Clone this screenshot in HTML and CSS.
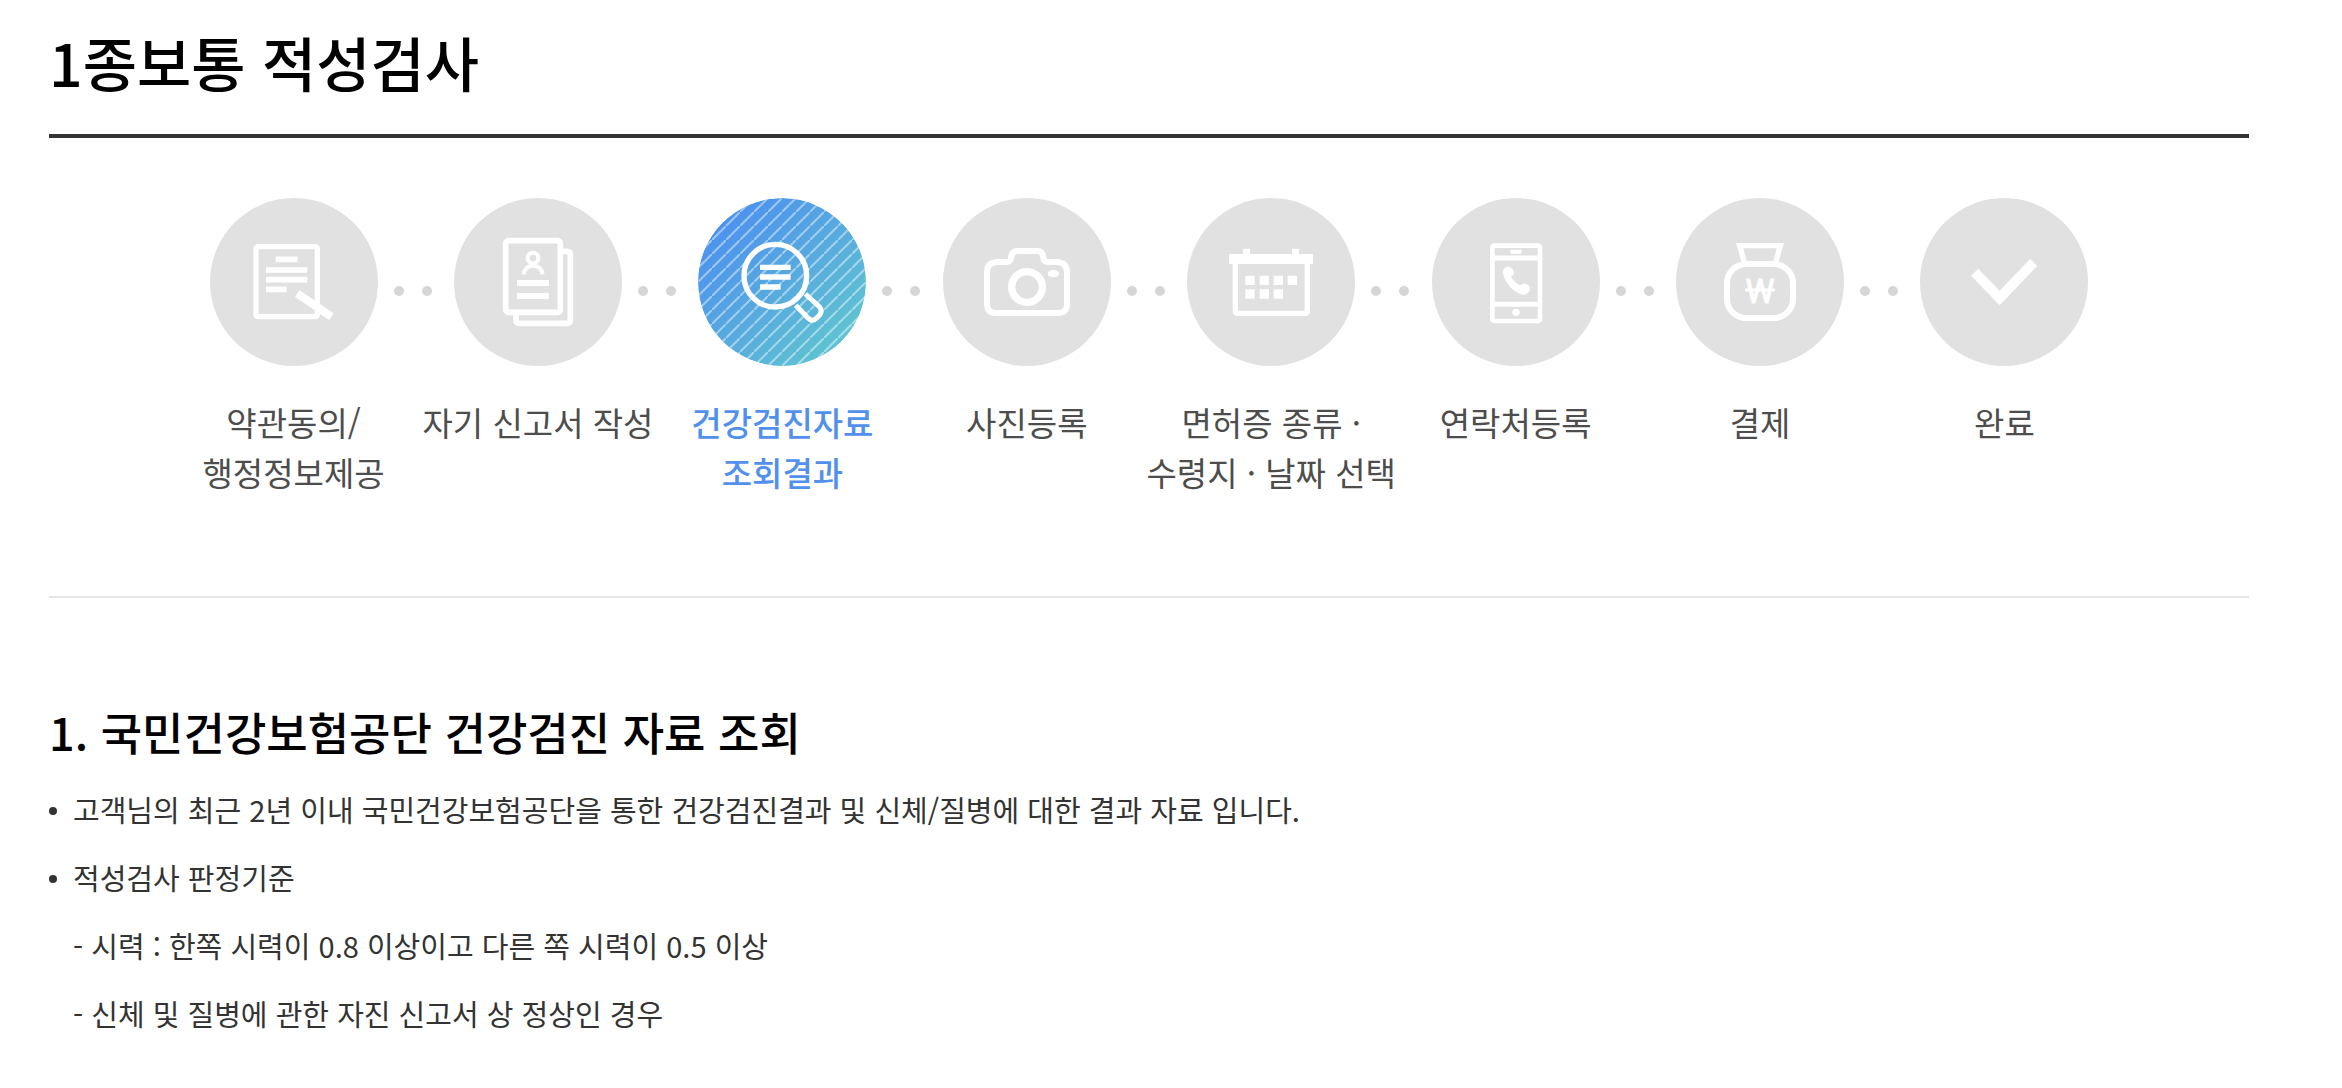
FILE: index.html
```
<!DOCTYPE html>
<html lang="ko">
<head>
  <meta charset="UTF-8" />
  <meta name="viewport" content="width=device-width, initial-scale=1.0" />
  <title>1종보통 적성검사</title>
  <link rel="stylesheet" href="styles.css">
</head>
<body>
  <main class="container">
    <h1>1종보통 적성검사</h1>

    <ol class="steps">
      <li class="step">
        <div class="step-mark">
          <svg class="step-icon" viewBox="0 0 504 504" aria-hidden="true">
            <rect x="138" y="146" width="184" height="210" rx="6" stroke-width="16" />
            <path d="M197 184h66M168 216h124M168 245h124M168 274h62" stroke-width="17" />
            <path d="M262 287L364 356" stroke-width="24" />
          </svg>
          <span class="step-dots"></span>
        </div>
        <p class="step-label">약관동의/<br>행정정보제공</p>
      </li>
      <li class="step">
        <div class="step-mark">
          <svg class="step-icon" viewBox="0 0 504 504" aria-hidden="true">
            <rect x="155" y="128" width="164" height="215" rx="8" stroke-width="17" />
            <path d="M323 160h16q10 0 10 10V366q0 10-10 10H196q-10 0-10-10V347" stroke-width="17" />
            <circle cx="237" cy="180" r="16" stroke-width="12" />
            <path d="M209 229C211 212 222 203 237 203S263 212 266 229" stroke-width="12" />
            <path d="M189 255h96M189 294h96" stroke-width="18" />
          </svg>
          <span class="step-dots"></span>
        </div>
        <p class="step-label">자기 신고서 작성</p>
      </li>
      <li class="step active" aria-current="step">
        <div class="step-mark">
          <svg class="step-icon" viewBox="0 0 504 504" aria-hidden="true">
            <defs>
              <linearGradient id="activeFill" x1="0.1" y1="0.1" x2="0.9" y2="0.9">
                <stop offset="0" stop-color="#4a8ff0" />
                <stop offset="0.5" stop-color="#57a9df" />
                <stop offset="1" stop-color="#5fc6d0" />
              </linearGradient>
              <pattern id="stripes" width="42" height="42" patternUnits="userSpaceOnUse">
                <path d="M0 42L42 0" stroke="#fff" stroke-opacity="0.45" stroke-width="6" />
              </pattern>
            </defs>
            <circle cx="252" cy="252" r="252" fill="url(#activeFill)" stroke="none" />
            <circle cx="252" cy="252" r="252" fill="url(#stripes)" stroke="none" />
            <circle cx="232" cy="233" r="94" stroke-width="16" />
            <path d="M186 208h92M186 237h92M186 267h62" stroke-width="16" />
            <path d="M293 322L330 360Q343 373 356 360L364 352Q375 339 364 326L322 288" stroke-width="15" />
          </svg>
          <span class="step-dots"></span>
        </div>
        <p class="step-label">건강검진자료<br>조회결과</p>
      </li>
      <li class="step">
        <div class="step-mark">
          <svg class="step-icon" viewBox="0 0 504 504" aria-hidden="true">
            <path d="M162 192H190Q203 192 204 180Q206 159 224 159H284Q299 159 301 180Q302 192 316 192H342Q372 194 372 222V318Q372 345 345 345H159Q132 345 132 318V222Q132 194 162 192Z" stroke-width="18" />
            <circle cx="252" cy="267" r="46" stroke-width="22" />
            <ellipse class="solid" cx="331" cy="227" rx="17" ry="11" />
          </svg>
          <span class="step-dots"></span>
        </div>
        <p class="step-label">사진등록</p>
      </li>
      <li class="step">
        <div class="step-mark">
          <svg class="step-icon" viewBox="0 0 504 504" aria-hidden="true">
            <rect x="145" y="190" width="216" height="156" rx="6" stroke-width="16" />
            <rect class="solid" x="126" y="168" width="252" height="30" rx="3" />
            <path class="solid" d="M168 152h21v20h-21zM315 152h21v20h-21z" />
            <path class="solid" d="M175 233h28v28h-28zM218 233h28v28h-28zM260 233h28v28h-28zM302 233h28v28h-28zM175 274h28v28h-28zM218 274h28v28h-28zM260 274h28v28h-28z" />
          </svg>
          <span class="step-dots"></span>
        </div>
        <p class="step-label">면허증 종류 ·<br>수령지 · 날짜 선택</p>
      </li>
      <li class="step">
        <div class="step-mark">
          <svg class="step-icon" viewBox="0 0 504 504" aria-hidden="true">
            <rect x="181" y="143" width="143" height="226" rx="6" stroke-width="14" />
            <path d="M181 180h143M181 319h143" stroke-width="15" />
            <rect class="solid" x="235" y="155" width="34" height="12" rx="4" />
            <circle class="solid" cx="252" cy="343" r="11" />
            <path class="solid" d="M213 224C212 210 224 204 234 207C242 211 248 222 246 228L237 236C243 246 254 257 264 262L273 257C282 255 294 263 294 272C292 284 282 292 272 290C244 284 216 252 213 224Z" />
          </svg>
          <span class="step-dots"></span>
        </div>
        <p class="step-label">연락처등록</p>
      </li>
      <li class="step">
        <div class="step-mark">
          <svg class="step-icon" viewBox="0 0 504 504" aria-hidden="true">
            <path d="M205 194L191 143H313L299 194" stroke-width="16" />
            <rect x="153" y="198" width="198" height="162" rx="58" stroke-width="18" />
            <text class="won" x="252" y="315">W</text>
            <path d="M207 276h90" stroke-width="9" />
          </svg>
          <span class="step-dots"></span>
        </div>
        <p class="step-label">결제</p>
      </li>
      <li class="step">
        <div class="step-mark">
          <svg class="step-icon" viewBox="0 0 504 504" aria-hidden="true">
            <path d="M164 223L239 300L341 193" stroke-width="30" />
          </svg>
        </div>
        <p class="step-label">완료</p>
      </li>
    </ol>

    <section class="result">
      <h2>1. 국민건강보험공단 건강검진 자료 조회</h2>
      <ul class="notes">
        <li>고객님의 최근 2년 이내 국민건강보험공단을 통한 건강검진결과 및 신체/질병에 대한 결과 자료 입니다.</li>
        <li>적성검사 판정기준</li>
      </ul>
      <ul class="criteria">
        <li>- 시력 : 한쪽 시력이 0.8 이상이고 다른 쪽 시력이 0.5 이상</li>
        <li>- 신체 및 질병에 관한 자진 신고서 상 정상인 경우</li>
      </ul>
    </section>
  </main>
</body>
</html>
```
FILE: styles.css
```
* {
  box-sizing: border-box;
}
body {
  margin: 0;
  background: #fff;
  color: #333;
  font-family: "Noto Sans CJK KR", "Noto Sans", sans-serif;
  font-weight: 400;
}
h1, h2, p, ol, ul {
  margin: 0;
  padding: 0;
}
ol, ul {
  list-style: none;
}
.container {
  max-width: 2298px;
  padding: 22px 49px 40px;
}
h1 {
  padding-bottom: 32px;
  border-bottom: 4px solid #333;
  color: #000;
  font-size: 59px;
  font-weight: 500;
  line-height: 80px;
}

/* progress steps */
.steps {
  display: grid;
  grid-template-columns: repeat(8, 11.11%);
  justify-content: center;
  padding: 60px 0 99px;
  border-bottom: 2px solid #e6e6e6;
}
.step {
  display: flex;
  flex-direction: column;
  align-items: center;
  gap: 31px;
}
.step-mark {
  display: grid;
  grid-template-columns: 1fr 168px 1fr;
  align-self: stretch;
}
.step-icon {
  grid-column: 2;
  display: block;
  width: 168px;
  height: 168px;
  border-radius: 50%;
  background: #e1e1e1;
  fill: none;
  stroke: #fff;
}
.step-icon .solid {
  fill: #fff;
  stroke: none;
}
.step-icon .won {
  fill: #fff;
  stroke-width: 3px;
  font-family: Roboto, sans-serif;
  font-size: 98px;
  text-anchor: middle;
}
.step-dots {
  display: flex;
  gap: 18px;
  width: 0;
  padding: 88px 0 0 16px;
}
.step-dots::before,
.step-dots::after {
  content: "";
  flex: none;
  width: 10px;
  height: 10px;
  border-radius: 50%;
  background: #d6d6d6;
}
.step-label {
  color: #4d4d4d;
  font-size: 33px;
  line-height: 50px;
  text-align: center;
  white-space: nowrap;
}
.active .step-icon {
  background: none;
}
.active .step-label {
  color: #5190ed;
  font-weight: 500;
}

/* checkup result */
.result {
  padding-top: 104px;
}
h2 {
  margin-bottom: 13px;
  color: #000;
  font-size: 45px;
  font-weight: 500;
  line-height: 60px;
}
.notes li,
.criteria li {
  font-size: 29px;
  line-height: 68px;
}
.notes li {
  display: flex;
  align-items: center;
  gap: 16px;
}
.notes li::before {
  content: "";
  flex: none;
  width: 8px;
  height: 8px;
  margin-top: 4px;
  border-radius: 50%;
  background: #333;
}
.criteria {
  padding-left: 24px;
}
```
